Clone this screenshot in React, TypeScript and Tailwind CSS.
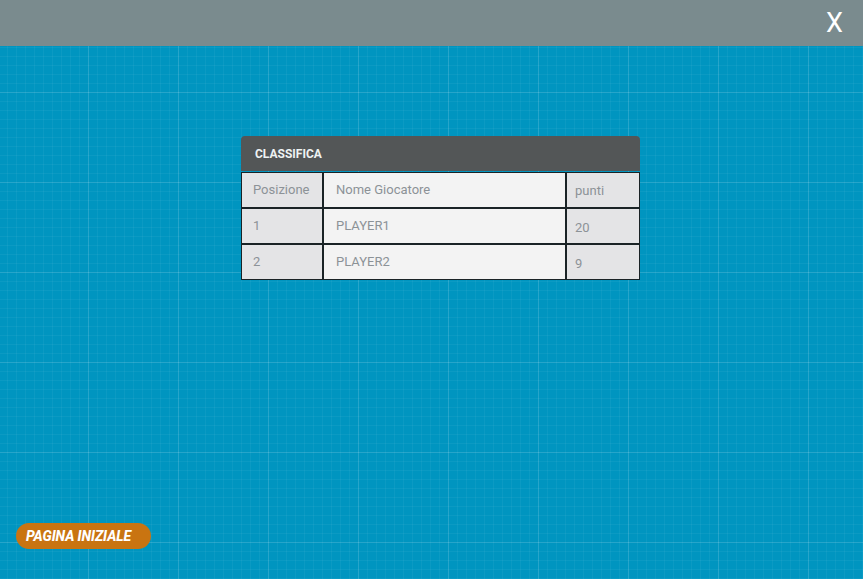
import React from 'react';

const rows = [
    { pos: '1', name: 'PLAYER1', points: '20' },
    { pos: '2', name: 'PLAYER2', points: '9' },
];

const cellSide = 'bg-[#e4e4e6] text-[#8c9297]';
const cellMid = 'bg-[#f3f3f3] text-[#8c9297]';

export default function App() {
    return (
        <div className="flex h-screen w-full flex-col overflow-hidden font-['Roboto','Liberation_Sans',sans-serif]">
            {/* top bar */}
            <div className="flex h-[46px] shrink-0 items-center justify-end bg-[#7a8b8e] pr-[20px]">
                <button className="text-[27px] leading-none text-white font-['Roboto','Liberation_Sans',sans-serif]">X</button>
            </div>

            {/* blueprint area */}
            <div className="flex flex-1 flex-col bg-[#0095c0] bg-[linear-gradient(to_right,rgba(255,255,255,0.11)_1px,transparent_1px),linear-gradient(to_bottom,rgba(255,255,255,0.11)_1px,transparent_1px),linear-gradient(to_right,rgba(255,255,255,0.045)_1px,transparent_1px),linear-gradient(to_bottom,rgba(255,255,255,0.045)_1px,transparent_1px)] bg-[size:90px_90px,90px_90px,9px_9px,9px_9px] bg-[position:88px_46px,88px_46px,7px_1px,7px_1px]">
                <div className="pl-[241px] pt-[90px]">
                    <div className="w-[399px]">
                        <div className="flex h-[35px] items-center rounded-t-[4px] bg-[#535657] pl-[14px] text-[12px] font-bold text-[#eef2f2]">
                            CLASSIFICA
                        </div>
                        <div className="mt-px grid grid-cols-[80px_241px_72px] gap-[2px] bg-[#1a2326] p-px text-[13px]">
                            <div className={`${cellSide} flex h-[34px] items-center pl-[11px]`}>Posizione</div>
                            <div className={`${cellMid} flex h-[34px] items-center pl-[12px]`}>Nome Giocatore</div>
                            <div className={`${cellSide} flex h-[34px] items-center pl-[8px] pt-[2px]`}>punti</div>
                            {rows.map((r) => (
                                <React.Fragment key={r.pos}>
                                    <div className={`${cellSide} flex h-[34px] items-center pl-[11px]`}>{r.pos}</div>
                                    <div className={`${cellMid} flex h-[34px] items-center pl-[12px]`}>{r.name}</div>
                                    <div className={`${cellSide} flex h-[34px] items-center pl-[8px] pt-[3px]`}>{r.points}</div>
                                </React.Fragment>
                            ))}
                        </div>
                    </div>
                </div>

                <div className="mt-auto mb-[30px] pl-[16px]">
                    <button className="flex h-[26px] w-[135px] items-center rounded-[13px] bg-[#c97411] pl-[10px] text-[14px] font-extrabold italic tracking-[-0.1px] text-white">
                        PAGINA INIZIALE
                    </button>
                </div>
            </div>
        </div>
    );
}
